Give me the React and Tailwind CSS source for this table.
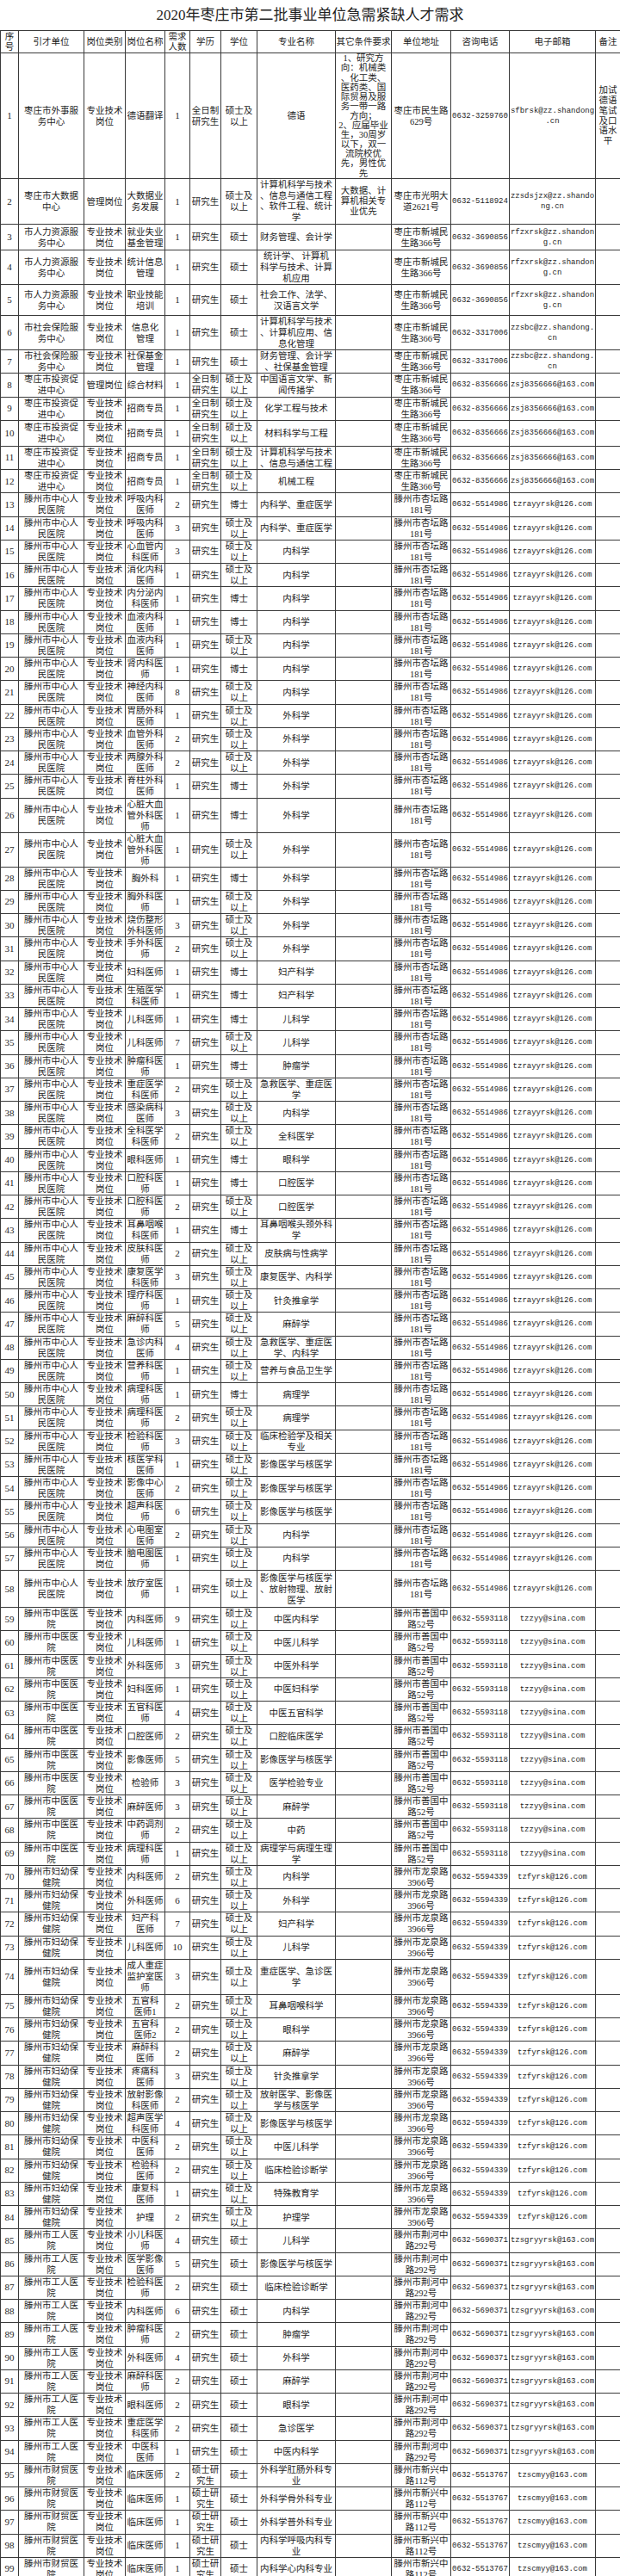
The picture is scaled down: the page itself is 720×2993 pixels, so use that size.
import React from 'react';

const groups = {
  ws: { unit: '枣庄市外事服\n务中心', addr: '枣庄市民生路\n629号', phone: '0632-3259760', email: 'sfbrsk@zz.shandong\n.cn' },
  dsj: { unit: '枣庄市大数据\n中心', addr: '枣庄市光明大\n道2621号', phone: '0632-5118924', email: 'zzsdsjzx@zz.shando\nng.cn' },
  rl: { unit: '市人力资源服\n务中心', addr: '枣庄市新城民\n生路366号', phone: '0632-3690856', email: 'rfzxrsk@zz.shandon\ng.cn' },
  sb: { unit: '市社会保险服\n务中心', addr: '枣庄市新城民\n生路366号', phone: '0632-3317006', email: 'zzsbc@zz.shandong.\ncn' },
  tz: { unit: '枣庄市投资促\n进中心', addr: '枣庄市新城民\n生路366号', phone: '0632-8356666', email: 'zsj8356666@163.com' },
  zx: { unit: '滕州市中心人\n民医院', addr: '滕州市杏坛路\n181号', phone: '0632-5514986', email: 'tzrayyrsk@126.com' },
  zy: { unit: '滕州市中医医\n院', addr: '滕州市善国中\n路52号', phone: '0632-5593118', email: 'tzzyy@sina.com' },
  fy: { unit: '滕州市妇幼保\n健院', addr: '滕州市龙泉路\n3966号', phone: '0632-5594339', email: 'tzfyrsk@126.com' },
  gr: { unit: '滕州市工人医\n院', addr: '滕州市荆河中\n路292号', phone: '0632-5690371', email: 'tzsgryyrsk@163.com' },
  cm: { unit: '滕州市财贸医\n院', addr: '滕州市新兴中\n路112号', phone: '0632-5513767', email: 'tzscmyy@163.com' },
};

const Z = '专业技术\n岗位';
const G = '管理岗位';
const Y = '研究生';
const Q = '全日制\n研究生';
const K = '硕士研\n究生';
const S = '硕士及\n以上';
const B = '博士';
const M = '硕士';

// [group, type, post, count, edu, degree, major, height]
const rows = [
  ['ws', Z, '德语翻译', 1, Q, S, '德语', 146],
  ['dsj', G, '大数据业\n务发展', 1, Y, S, '计算机科学与技术\n、信息与通信工程\n、软件工程、统计\n学', 53],
  ['rl', Z, '就业失业\n基金管理', 1, Y, M, '财务管理、会计学', 30],
  ['rl', Z, '统计信息\n管理', 1, Y, M, '统计学、 计算机\n科学与技术、计算\n机应用', 37],
  ['rl', Z, '职业技能\n培训', 1, Y, M, '社会工作、法学、\n汉语言文学', 36],
  ['sb', Z, '信息化\n管理', 1, Y, M, '计算机科学与技术\n、计算机应用、信\n息化管理', 40],
  ['sb', Z, '社保基金\n管理', 1, Y, M, '财务管理、会计学\n、社保基金管理'],
  ['tz', G, '综合材料', 1, Q, S, '中国语言文学、新\n闻传播学'],
  ['tz', Z, '招商专员', 1, Q, S, '化学工程与技术'],
  ['tz', Z, '招商专员', 1, Q, S, '材料科学与工程', 30],
  ['tz', Z, '招商专员', 1, Q, S, '计算机科学与技术\n、信息与通信工程'],
  ['tz', Z, '招商专员', 1, Q, S, '机械工程'],
  ['zx', Z, '呼吸内科\n医师', 2, Y, B, '内科学、重症医学'],
  ['zx', Z, '呼吸内科\n医师', 3, Y, S, '内科学、重症医学'],
  ['zx', Z, '心血管内\n科医师', 3, Y, S, '内科学'],
  ['zx', Z, '消化内科\n医师', 1, Y, S, '内科学'],
  ['zx', Z, '内分泌内\n科医师', 1, Y, B, '内科学'],
  ['zx', Z, '血液内科\n医师', 1, Y, B, '内科学'],
  ['zx', Z, '血液内科\n医师', 1, Y, S, '内科学'],
  ['zx', Z, '肾内科医\n师', 1, Y, B, '内科学'],
  ['zx', Z, '神经内科\n医师', 8, Y, S, '内科学'],
  ['zx', Z, '胃肠外科\n医师', 1, Y, S, '外科学'],
  ['zx', Z, '血管外科\n医师', 2, Y, S, '外科学'],
  ['zx', Z, '两腺外科\n医师', 2, Y, S, '外科学'],
  ['zx', Z, '脊柱外科\n医师', 1, Y, B, '外科学'],
  ['zx', Z, '心脏大血\n管外科医\n师', 1, Y, B, '外科学', 40],
  ['zx', Z, '心脏大血\n管外科医\n师', 1, Y, S, '外科学', 38],
  ['zx', Z, '胸外科', 1, Y, B, '外科学'],
  ['zx', Z, '胸外科医\n师', 1, Y, S, '外科学'],
  ['zx', Z, '烧伤整形\n外科医师', 3, Y, S, '外科学'],
  ['zx', Z, '手外科医\n师', 2, Y, S, '外科学'],
  ['zx', Z, '妇科医师', 1, Y, B, '妇产科学'],
  ['zx', Z, '生殖医学\n科医师', 1, Y, B, '妇产科学'],
  ['zx', Z, '儿科医师', 1, Y, B, '儿科学'],
  ['zx', Z, '儿科医师', 7, Y, S, '儿科学'],
  ['zx', Z, '肿瘤科医\n师', 1, Y, B, '肿瘤学'],
  ['zx', Z, '重症医学\n科医师', 2, Y, S, '急救医学、重症医\n学'],
  ['zx', Z, '感染病科\n医师', 3, Y, S, '内科学'],
  ['zx', Z, '全科医学\n科医师', 2, Y, S, '全科医学'],
  ['zx', Z, '眼科医师', 1, Y, B, '眼科学'],
  ['zx', Z, '口腔科医\n师', 1, Y, B, '口腔医学'],
  ['zx', Z, '口腔科医\n师', 2, Y, S, '口腔医学'],
  ['zx', Z, '耳鼻咽喉\n科医师', 1, Y, B, '耳鼻咽喉头颈外科\n学'],
  ['zx', Z, '皮肤科医\n师', 2, Y, S, '皮肤病与性病学'],
  ['zx', Z, '康复医学\n科医师', 3, Y, S, '康复医学、内科学'],
  ['zx', Z, '理疗科医\n师', 1, Y, S, '针灸推拿学'],
  ['zx', Z, '麻醉科医\n师', 5, Y, S, '麻醉学'],
  ['zx', Z, '急诊内科\n医师', 4, Y, S, '急救医学、重症医\n学、内科学'],
  ['zx', Z, '营养科医\n师', 1, Y, S, '营养与食品卫生学'],
  ['zx', Z, '病理科医\n师', 1, Y, B, '病理学'],
  ['zx', Z, '病理科医\n师', 2, Y, S, '病理学'],
  ['zx', Z, '检验科医\n师', 3, Y, S, '临床检验学及相关\n专业'],
  ['zx', Z, '核医学科\n医师', 1, Y, S, '影像医学与核医学'],
  ['zx', Z, '影像中心\n医师', 2, Y, S, '影像医学与核医学'],
  ['zx', Z, '超声科医\n师', 6, Y, S, '影像医学与核医学'],
  ['zx', Z, '心电图室\n医师', 2, Y, S, '内科学'],
  ['zx', Z, '脑电图医\n师', 1, Y, S, '内科学'],
  ['zx', Z, '放疗室医\n师', 1, Y, S, '影像医学与核医学\n、放射物理、放射\n医学', 43],
  ['zy', Z, '内科医师', 9, Y, S, '中医内科学'],
  ['zy', Z, '儿科医师', 1, Y, S, '中医儿科学'],
  ['zy', Z, '外科医师', 3, Y, S, '中医外科学'],
  ['zy', Z, '妇科医师', 1, Y, S, '中医妇科学'],
  ['zy', Z, '五官科医\n师', 4, Y, S, '中医五官科学'],
  ['zy', Z, '口腔医师', 2, Y, S, '口腔临床医学'],
  ['zy', Z, '影像医师', 5, Y, S, '影像医学与核医学'],
  ['zy', Z, '检验师', 3, Y, S, '医学检验专业'],
  ['zy', Z, '麻醉医师', 3, Y, S, '麻醉学'],
  ['zy', Z, '中药调剂\n师', 2, Y, S, '中药'],
  ['zy', Z, '病理科医\n师', 1, Y, S, '病理学与病理生理\n学'],
  ['fy', Z, '内科医师', 2, Y, S, '内科学'],
  ['fy', Z, '外科医师', 6, Y, S, '外科学'],
  ['fy', Z, '妇产科\n医师', 7, Y, S, '妇产科学'],
  ['fy', Z, '儿科医师', 10, Y, S, '儿科学'],
  ['fy', Z, '成人重症\n监护室医\n师', 3, Y, S, '重症医学、急诊医\n学', 41],
  ['fy', Z, '五官科\n医师1', 2, Y, S, '耳鼻咽喉科学'],
  ['fy', Z, '五官科\n医师2', 2, Y, S, '眼科学'],
  ['fy', Z, '麻醉科\n医师', 2, Y, S, '麻醉学'],
  ['fy', Z, '疼痛科\n医师', 3, Y, S, '针灸推拿学'],
  ['fy', Z, '放射影像\n科医师', 2, Y, S, '放射医学、影像医\n学与核医学'],
  ['fy', Z, '超声医学\n科医师', 4, Y, S, '影像医学与核医学'],
  ['fy', Z, '中医科\n医师', 2, Y, S, '中医儿科学'],
  ['fy', Z, '检验科\n医师', 2, Y, S, '临床检验诊断学'],
  ['fy', Z, '康复科\n医师', 1, Y, S, '特殊教育学'],
  ['fy', Z, '护理', 2, Y, S, '护理学'],
  ['gr', Z, '小儿科医\n师', 4, Y, M, '儿科学'],
  ['gr', Z, '医学影像\n医师', 5, Y, M, '影像医学与核医学'],
  ['gr', Z, '检验科医\n师', 2, Y, M, '临床检验诊断学'],
  ['gr', Z, '内科医师', 6, Y, M, '内科学'],
  ['gr', Z, '肿瘤科医\n师', 2, Y, M, '肿瘤学'],
  ['gr', Z, '外科医师', 4, Y, M, '外科学'],
  ['gr', Z, '麻醉科医\n师', 2, Y, M, '麻醉学'],
  ['gr', Z, '眼科医师', 2, Y, M, '眼科学'],
  ['gr', Z, '重症医学\n科医师', 2, Y, M, '急诊医学'],
  ['gr', Z, '中医科\n医师', 1, Y, M, '中医内科学'],
  ['cm', Z, '临床医师', 2, K, M, '外科学肛肠外科专\n业'],
  ['cm', Z, '临床医师', 1, K, M, '外科学骨外科专业'],
  ['cm', Z, '临床医师', 1, K, M, '外科学普外科专业'],
  ['cm', Z, '临床医师', 1, K, M, '内科学呼吸内科专\n业'],
  ['cm', Z, '临床医师', 1, K, M, '内科学心内科专业'],
];

const extra = {
  1: {
    other: '1、研究方\n向：机械类\n、化工类、\n医药类、国\n际贸易及服\n务一带一路\n方向；\n2、应届毕业\n生，30周岁\n以下，双一\n流院校优\n先，男性优\n先',
    note: '加试\n德语\n笔试\n及口\n语水\n平',
  },
  2: { other: '大数据、计\n算机相关专\n业优先' },
};

const headers = ['序\n号', '引才单位', '岗位类别', '岗位名称', '需求\n人数', '学历', '学位', '专业名称', '其它条件要求', '单位地址', '咨询电话', '电子邮箱', '备注'];

const cell = 'border border-[#3a3a3a] p-0 text-center align-middle whitespace-pre-line';
const num = "font-['Liberation_Serif'] text-[11px]";
const mono = "font-['Liberation_Mono'] text-[9px] leading-[12px]";

function Row({ r, i }) {
  const [gk, type, post, count, edu, deg, major, h] = r;
  const g = groups[gk];
  const no = i + 1;
  const ex = extra[no] || {};
  return (
    <tr style={{ height: h || 27.25 }}>
      <td className={`${cell} ${num}`}>{no}</td>
      <td className={cell}>{g.unit}</td>
      <td className={cell}>{type}</td>
      <td className={cell}>{post}</td>
      <td className={`${cell} ${num}`}>{count}</td>
      <td className={cell}>{edu}</td>
      <td className={cell}>{deg}</td>
      <td className={`${cell} ${no === 2 ? 'leading-[12.5px]' : ''}`}>{major}</td>
      <td className={cell}>
        {no === 1 ? (
          <div className="leading-[11.1px]">{ex.other}</div>
        ) : (
          ex.other && <div className="leading-[12px]">{ex.other}</div>
        )}
      </td>
      <td className={cell}>{g.addr}</td>
      <td className={`${cell} ${mono}`}>{g.phone}</td>
      <td className={`${cell} ${mono}`}>{g.email}</td>
      <td className={`${cell} leading-[11.7px]`}>{ex.note}</td>
    </tr>
  );
}

export default function App() {
  return (
    <div className="w-[720px] bg-white text-[#1e1e1e] font-['Liberation_Serif','Noto_Sans_CJK_SC',serif]">
      <div className="h-[35px] flex items-center justify-center text-[17px] leading-none">
        2020年枣庄市第二批事业单位急需紧缺人才需求
      </div>
      <table className="w-[720px] table-fixed border-collapse text-[10.5px] leading-[13px]">
        <colgroup>
          <col className="w-[21px]" />
          <col className="w-[76px]" />
          <col className="w-[48px]" />
          <col className="w-[46px]" />
          <col className="w-[29px]" />
          <col className="w-[36px]" />
          <col className="w-[42px]" />
          <col className="w-[91px]" />
          <col className="w-[65px]" />
          <col className="w-[69px]" />
          <col className="w-[68px]" />
          <col className="w-[100px]" />
          <col className="w-[29px]" />
        </colgroup>
        <thead>
          <tr className="h-[26px]">
            {headers.map((t) => (
              <th key={t} className={`${cell} font-normal leading-[12px]`}>
                {t}
              </th>
            ))}
          </tr>
        </thead>
        <tbody>
          {rows.map((r, i) => (
            <Row key={i} r={r} i={i} />
          ))}
        </tbody>
      </table>
    </div>
  );
}
